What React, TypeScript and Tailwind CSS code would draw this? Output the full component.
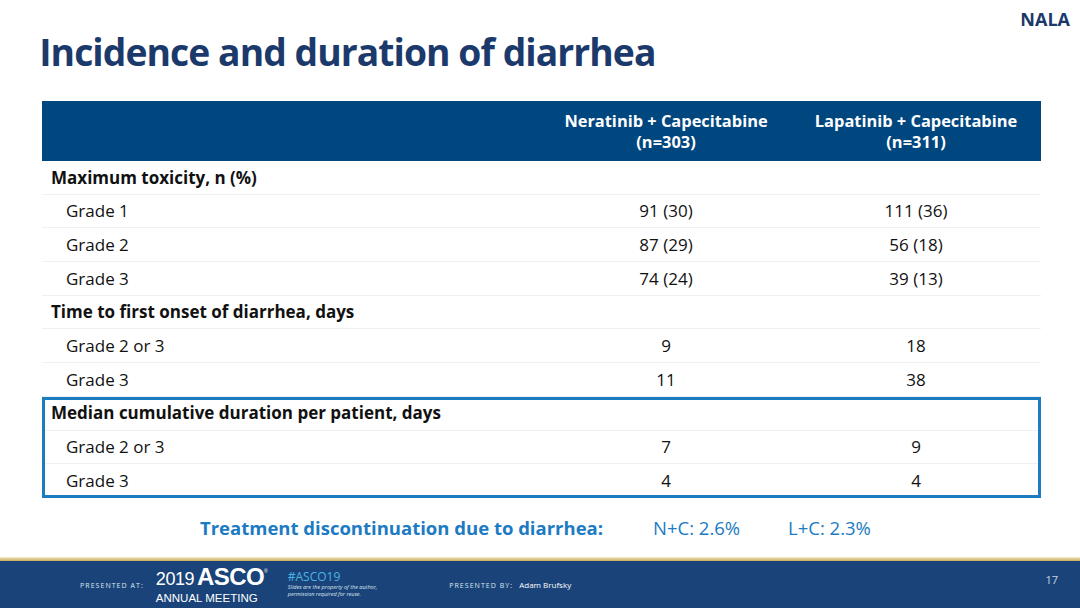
import React from 'react'

type R = { label: string; a?: string; b?: string; head?: boolean }

const rows: R[] = [
  { label: 'Maximum toxicity, n (%)', head: true },
  { label: 'Grade 1', a: '91 (30)', b: '111 (36)' },
  { label: 'Grade 2', a: '87 (29)', b: '56 (18)' },
  { label: 'Grade 3', a: '74 (24)', b: '39 (13)' },
  { label: 'Time to first onset of diarrhea, days', head: true },
  { label: 'Grade 2 or 3', a: '9', b: '18' },
  { label: 'Grade 3', a: '11', b: '38' },
]

const boxed: R[] = [
  { label: 'Median cumulative duration per patient, days', head: true },
  { label: 'Grade 2 or 3', a: '7', b: '9' },
  { label: 'Grade 3', a: '4', b: '4' },
]

const Row = ({ r, last }: { r: R; last?: boolean }) => (
  <div className={`flex h-[33.7px] items-center text-[17px] text-[#111] ${last ? '' : 'border-b border-[#edf1f4]'}`}>
    <div className={`flex-1 ${r.head ? 'pl-[9px] font-bold' : 'pl-[24px]'}`}>{r.label}</div>
    <div className="w-[250px] text-center">{r.a}</div>
    <div className="w-[250px] text-center">{r.b}</div>
  </div>
)

export default function App() {
  return (
    <div className="w-[1080px] h-[608px] bg-white flex flex-col overflow-hidden" style={{ fontFamily: '"Open Sans", "Noto Sans", sans-serif' }}>
      <div className="flex justify-end pr-[10px] pt-[10px] h-[28px]">
        <span className="text-[18px] font-bold text-[#1b3a6b] leading-none">NALA</span>
      </div>
      <h1 className="pl-[40px] text-[38px] font-bold text-[#1b3a6b] leading-none tracking-tight origin-left scale-x-[0.98] mt-[4px] h-[69px]">
        Incidence and duration of diarrhea
      </h1>
      <div className="mx-[42px] w-[999px]">
        <div className="flex h-[60px] items-center bg-[#00467f] text-white font-bold text-[16.4px] leading-[21px]">
          <div className="flex-1" />
          <div className="w-[250px] text-center">Neratinib + Capecitabine<br />(n=303)</div>
          <div className="w-[250px] text-center">Lapatinib + Capecitabine<br />(n=311)</div>
        </div>
        {rows.map((r, i) => (
          <Row key={i} r={r} />
        ))}
        <div className="outline-3 outline-[#1b7cc0] -outline-offset-3">
          {boxed.map((r, i) => (
            <Row key={i} r={r} last={i === boxed.length - 1} />
          ))}
        </div>
      </div>
      <div className="flex items-center h-[59px] text-[18.5px] text-[#1c7bc2]">
        <span className="ml-[200px] w-[453px] font-bold">Treatment discontinuation due to diarrhea:</span>
        <span className="w-[135px]">N+C: 2.6%</span>
        <span>L+C: 2.3%</span>
      </div>
      <div className="h-[4px] bg-gradient-to-b from-[#f3ead0] to-[#c9a951]" />
      <div className="flex-1 bg-[#1a4479] flex items-center text-white">
        <span className="ml-[80px] text-[7px] leading-none tracking-[0.15em] text-[#dfe6f0] mt-[2px]">PRESENTED AT:</span>
        <div className="ml-[12px] flex flex-col" style={{ fontFamily: '"Liberation Sans", Arial, sans-serif' }}>
          <div className="flex items-baseline leading-[28px] h-[28px]">
            <span className="text-[18px] tracking-tight">2019</span>
            <span className="text-[24px] font-bold ml-[3px] tracking-tight">ASCO</span>
            <span className="text-[5px] self-start leading-none mt-[6px]">®</span>
          </div>
          <span className="text-[11.5px] leading-[14px]">ANNUAL MEETING</span>
        </div>
        <div className="ml-[20px] flex flex-col">
          <span className="text-[12px] leading-[13px] text-[#4ab3e6]">#ASCO19</span>
          <span className="text-[5.5px] leading-[7px] italic mt-[1px] text-[#dfe6f0]">Slides are the property of the author,</span>
          <span className="text-[5.5px] leading-[7px] italic text-[#dfe6f0]">permission required for reuse.</span>
        </div>
        <span className="ml-[72px] text-[7px] leading-none tracking-[0.15em] text-[#dfe6f0] mt-[2px]">PRESENTED BY:</span>
        <span className="ml-[6px] text-[8px] leading-none mt-[2px]">Adam Brufsky</span>
        <span className="ml-auto mr-[22px] text-[11px] leading-none text-[#c9d3e2] -mt-[10px]">17</span>
      </div>
    </div>
  )
}
